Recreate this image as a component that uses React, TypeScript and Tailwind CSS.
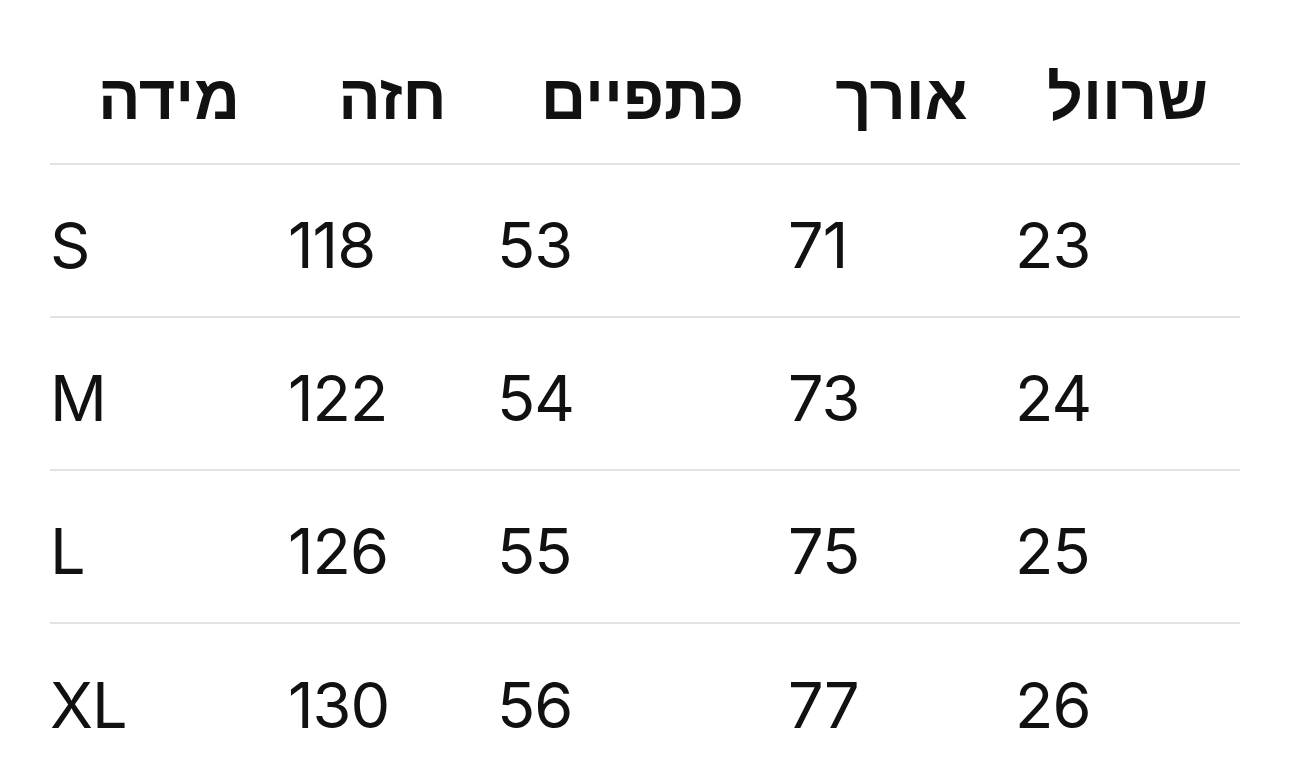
const headers = ["מידה", "חזה", "כתפיים", "אורך", "שרוול"];

const rows = [
  ["S", "118", "53", "71", "23"],
  ["M", "122", "54", "73", "24"],
  ["L", "126", "55", "75", "25"],
  ["XL", "130", "56", "77", "26"],
];

const cols = "grid grid-cols-[238px_209px_291px_227px_225px]";

export default function App() {
  return (
    <div
      className="min-h-[778px] bg-white px-[50px] text-[#111]"
      style={{ fontFamily: 'Inter, "Liberation Sans", "DejaVu Sans", Arial, sans-serif' }}
    >
      <div className={`${cols} h-[165px] border-b-2 border-[#e3e3e3]`}>
        {headers.map((h) => (
          <div
            key={h}
            className="flex items-center justify-center pt-[32px] font-['Liberation_Sans',sans-serif] text-[63px] font-bold"
            dir="rtl"
          >
            {h}
          </div>
        ))}
      </div>
      {rows.map((r, i) => (
        <div
          key={r[0]}
          className={`${cols} h-[153px] ${i < rows.length - 1 ? "border-b-2 border-[#e3e3e3]" : ""}`}
        >
          {r.map((c, j) => (
            <div key={j} className="flex items-center pt-[10px] text-[63px] leading-none tracking-[-1px]">
              {c}
            </div>
          ))}
        </div>
      ))}
    </div>
  );
}
